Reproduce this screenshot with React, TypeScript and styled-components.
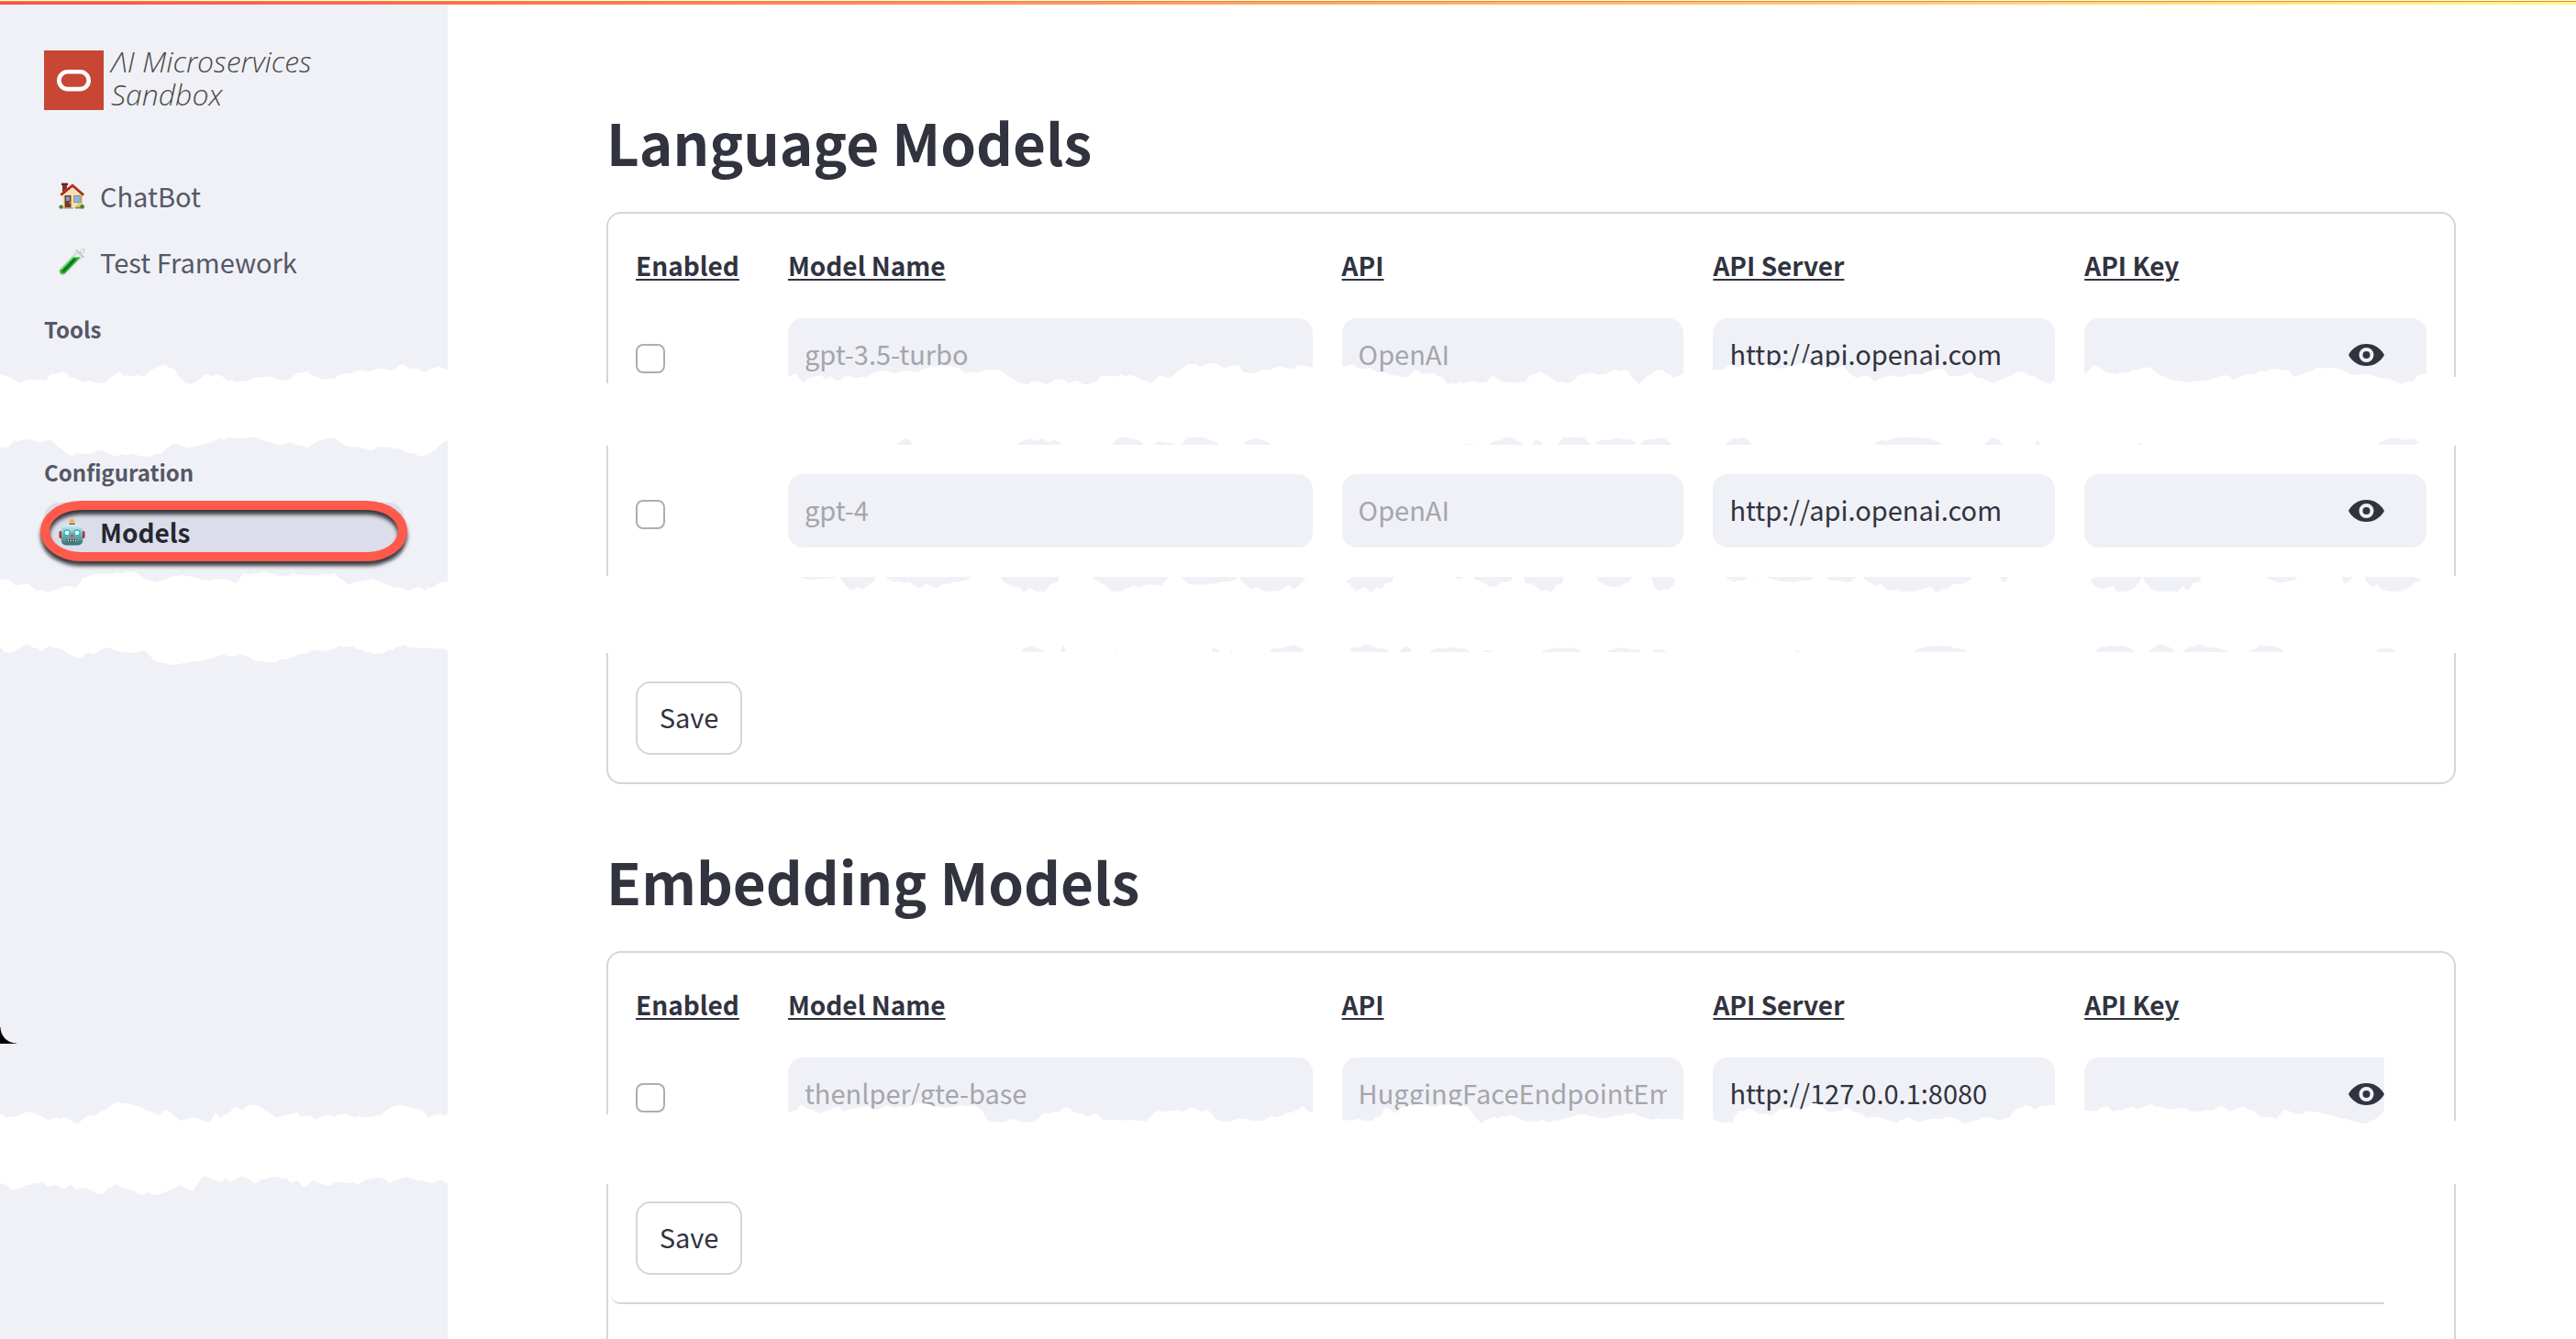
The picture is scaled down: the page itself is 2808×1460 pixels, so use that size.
import React from "react";
import styled, { createGlobalStyle } from "styled-components";

const ink = "#31333f";
const field = "#f0f1f7";
const line = "#d6d6d8";

const GlobalStyle = createGlobalStyle`
  *, *::before, *::after { box-sizing: border-box; }
  body {
    margin: 0;
    background: #fff;
    color: ${ink};
    font-family: "Noto Sans CJK SC", "Noto Sans", sans-serif;
    font-size: 29px;
  }
`;

const Page = styled.div`
  display: grid;
  grid-template-rows: auto 1fr;
  height: 100vh;
  overflow: hidden;
`;

const Decoration = styled.div`
  height: 5px;
  border-top: 1px solid #fff;
  background: linear-gradient(#f08a18 1px, transparent 1px),
    linear-gradient(90deg, #ff4f4b, #fff980);
`;

const Columns = styled.div`
  display: grid;
  grid-template-columns: 488px minmax(0, 1fr);
  min-height: 0;
`;

/* ---------- sidebar ---------- */

const Sidebar = styled.aside`
  display: flex;
  flex-direction: column;
  background: ${field};
  color: #555867;
`;

const Brand = styled.div`
  display: flex;
  align-items: flex-end;
  gap: 8px;
  margin: 44px 48px 60px;
`;

const BrandName = styled.span`
  font-family: "Open Sans", "Noto Sans", sans-serif;
  font-size: 32px;
  font-style: italic;
  font-weight: 300;
  line-height: 36px;
  white-space: nowrap;
  color: #4c4b49;
`;

const Nav = styled.nav`
  display: flex;
  flex-direction: column;
  gap: 8px;
  padding: 0 48px;
`;

const NavLink = styled.a<{ $active?: boolean }>`
  position: relative;
  display: flex;
  align-items: center;
  gap: 16px;
  height: 64px;
  padding: 0 16px;
  border-radius: 16px;
  background: ${(p) => (p.$active ? "#dbdeea" : "transparent")};
  color: ${(p) => (p.$active ? "#262730" : "inherit")};
  font-size: ${(p) => (p.$active ? 28 : 29)}px;
  font-weight: ${(p) => (p.$active ? 700 : 400)};
  text-decoration: none;

  svg { flex: none; }
`;

const Ring = styled.span`
  position: absolute;
  inset: -2px -4px 0;
  border: 10px solid #ff5a4c;
  border-radius: 44px / 33px;
  filter: drop-shadow(0 5px 2px rgba(0, 0, 0, 0.75));
`;

const CutLink = styled.div`
  height: 25px;
  padding: 18px 17px 0;
  overflow: hidden;
`;

const SectionLabel = styled.h2<{ $above: number; $below: number }>`
  margin: ${(p) => p.$above}px 48px ${(p) => p.$below}px;
  font-size: 24px;
  font-weight: 700;
  line-height: 40px;
`;

const Blank = styled.div<{ $height: number }>`
  display: flex;
  align-items: flex-end;
  height: ${(p) => p.$height}px;
`;

const WindowCorner = styled.span`
  width: 18px;
  height: 18px;
  background: radial-gradient(circle at top right, transparent 17px, #000 18px);
`;

/* ---------- main ---------- */

const Main = styled.main`
  display: flex;
  flex-direction: column;
  min-height: 0;
  padding: 110px 131px 0 173px;
`;

const Title = styled.h1`
  margin: 0 0 38px;
  font-size: 62px;
  font-weight: 700;
  line-height: 78px;
`;

const Card = styled.form<{ $open?: boolean }>`
  display: flex;
  flex-direction: column;
  flex: ${(p) => (p.$open ? "1" : "none")};
  margin-bottom: ${(p) => (p.$open ? 0 : 66)}px;
  padding: 30px 30px ${(p) => (p.$open ? 0 : 30)}px;
  border: 2px solid ${line};
  border-bottom-width: ${(p) => (p.$open ? 0 : 2)}px;
  border-radius: ${(p) => (p.$open ? "16px 16px 0 0" : "16px")};
`;

const Row = styled.div<{ $above?: number; $height?: number; $end?: boolean }>`
  display: grid;
  grid-template-columns:
    minmax(0, 134fr) minmax(0, 572fr) minmax(0, 373fr) minmax(0, 373fr)
    minmax(0, 373fr);
  column-gap: 32px;
  align-content: ${(p) => (p.$end ? "end" : "start")};
  height: ${(p) => p.$height ?? 80}px;
  margin-top: ${(p) => p.$above ?? 0}px;
  overflow: hidden;
`;

const Heading = styled.span`
  font-size: 28px;
  font-weight: 700;
  line-height: 52px;
  text-decoration: underline;
  text-decoration-thickness: 2px;
  text-underline-offset: 3px;
`;

const Tick = styled.input`
  appearance: none;
  width: 32px;
  height: 32px;
  margin: 28px 0 0;
  border: 2px solid #adadb3;
  border-radius: 8px;
  background: #fff;
`;

const Field = styled.div<{ $cut?: boolean }>`
  display: flex;
  align-items: center;
  height: 80px;
  margin-right: ${(p) => (p.$cut ? 46 : 0)}px;
  padding-right: ${(p) => (p.$cut ? 0 : 46)}px;
  border-radius: ${(p) => (p.$cut ? "16px 0 0 16px" : "16px")};
  background: ${field};
`;

const TextBox = styled.input`
  width: 100%;
  min-width: 0;
  height: 80px;
  padding: 0 18px 4px;
  border: 0;
  border-radius: 16px;
  background: ${field};
  color: ${ink};
  font: inherit;

  &:disabled {
    color: #a5a6ab;
    -webkit-text-fill-color: #a5a6ab;
  }
`;

const Reveal = styled.button`
  display: flex;
  padding: 0;
  border: 0;
  background: none;
  color: ${ink};
`;

const Stub = styled.span`
  height: 80px;
  border-radius: 16px;
  background: ${field};
`;

const SaveButton = styled.button<{ $above: number }>`
  align-self: flex-start;
  width: 116px;
  height: 80px;
  margin-top: ${(p) => p.$above}px;
  padding: 0 0 4px;
  border: 2px solid ${line};
  border-radius: 16px;
  background: #fff;
  color: ${ink};
  font: inherit;
`;

const FormEnd = styled.div`
  height: 10px;
  margin: 22px 46px 0 -27px;
  border-bottom: 2px solid ${line};
  border-bottom-left-radius: 12px;
`;

/* ---------- torn paper ---------- */

const TearBand = styled.div<{ $bleed: number }>`
  position: relative;
  z-index: 1;
  flex: none;
  height: 58px;
  margin: 0 -${(p) => p.$bleed}px;
  background: #fff;

  svg {
    position: absolute;
    top: -26px;
    left: 0;
    width: 100%;
    height: 110px;
    pointer-events: none;
  }
`;

type Pt = [number, number];

const pts = (s: string): Pt[] =>
  s.split(";").map((p) => p.split(",").map(Number) as Pt);

const noise = (n: number) => {
  const v = Math.sin(n * 12.9898) * 43758.5453;
  return v - Math.floor(v);
};

// Adds small fibres between the coarse points of an edge.
const roughen = (edge: Pt[]): Pt[] => {
  const out: Pt[] = [];
  edge.forEach(([x, y], i) => {
    out.push([x, y]);
    const next = edge[i + 1];
    if (!next) return;
    const steps = Math.floor((next[0] - x) / 4);
    for (let k = 1; k < steps; k++) {
      const t = k / steps;
      const px = x + (next[0] - x) * t;
      out.push([px, y + (next[1] - y) * t + (noise(px) - 0.5) * 3]);
    }
  });
  return out;
};

// An edge that is flat at `base` but for scraps reaching to the given y.
const scraps = (from: number, to: number, base: number, list: string): Pt[] => {
  const out: Pt[] = [[from, base]];
  list.split(";").forEach((s) => {
    const [a, b, y] = s.split(",").map(Number);
    out.push([a, base]);
    const n = Math.max(1, Math.round((b - a) / 6));
    for (let k = 0; k < n; k++) {
      const t = (k + 0.5) / n;
      const swell = Math.sqrt(Math.sin(Math.PI * t));
      const depth = swell * (0.5 + 0.5 * noise(a + k * 3));
      out.push([a + t * (b - a), base + (y - base) * depth]);
    }
    out.push([b, base]);
  });
  out.push([to, base]);
  return out;
};

interface TearProps {
  x: number;
  y: number;
  width: number;
  top: Pt[];
  bottom: Pt[];
  bleed?: number;
}

const Tear = ({ x, y, width, top, bottom, bleed = 0 }: TearProps) => {
  const outline = [...top, ...[...bottom].reverse()];
  return (
    <TearBand $bleed={bleed}>
      <svg
        viewBox={`${x} ${y - 26} ${width} 110`}
        preserveAspectRatio="none"
        aria-hidden="true"
      >
        <polygon fill="#fff" points={outline.map((p) => p.join(",")).join(" ")} />
      </svg>
    </TearBand>
  );
};

const sideTears = [
  {
    y: 419,
    top: "0,408;12,412;22,418;27,415;50,415;55,408;62,407;72,406;76,411;85,414;92,417;97,415;108,418;115,417;120,412;130,405;135,410;150,409;158,411;163,404;178,397;190,402;195,411;203,418;214,416;222,409;238,409;248,415;258,417;272,414;280,411;298,412;308,415;315,414;324,407;335,405;345,411;355,414;380,407;390,404;400,405;415,402;425,404;440,397;448,402;465,405;478,399;488,404",
    bottom:
      "0,488;8,488;15,481;30,479;45,482;55,480;63,487;75,496;92,495;110,491;125,498;145,494;160,498;175,495;188,484;198,486;205,489;214,486;225,483;240,478;262,478;280,477;290,481;300,484;318,483;335,488;348,480;363,478;375,485;390,487;403,491;415,487;430,489;445,494;458,498;465,496;475,490;488,480",
  },
  {
    y: 645,
    top: "0,632;10,632;16,638;30,636;40,644;54,645;68,640;84,640;90,630;110,626;130,625;148,624;155,629;170,635;190,627;210,629;220,633;235,631;250,632;258,636;265,625;290,624;305,629;320,625;345,627;365,625;370,631;382,637;393,634;405,631;415,635;430,641;445,644;455,640;463,644;475,638;488,634",
    bottom:
      "0,705;5,711;15,710;28,703;40,706;45,710;55,704;72,711;85,718;93,713;105,712;115,706;130,710;145,712;157,709;168,720;185,725;200,723;215,721;230,718;243,713;256,716;262,713;275,719;297,722;315,717;330,713;340,709;357,711;370,704;385,704;390,708;408,713;420,711;440,703;455,707;475,707;488,710",
  },
  {
    y: 1225,
    top: "0,1214;8,1219;20,1216;31,1212;42,1216;52,1221;70,1218;85,1225;92,1219;105,1216;115,1210;125,1203;138,1203;155,1208;165,1212;173,1216;180,1210;190,1217;197,1222;210,1218;220,1222;229,1223;235,1213;240,1219;250,1213;257,1206;264,1211;273,1204;282,1206;290,1211;300,1218;315,1215;323,1212;328,1217;340,1217;344,1221;357,1215;364,1218;377,1214;383,1217;395,1218;415,1216;425,1208;432,1205;445,1207;460,1210;467,1219;480,1215;484,1217;488,1214",
    bottom:
      "0,1290;8,1293;13,1298;22,1296;33,1292;46,1288;52,1294;62,1292;70,1297;77,1291;83,1297;95,1296;106,1302;113,1301;118,1295;126,1291;135,1296;145,1298;155,1303;163,1300;172,1303;182,1299;195,1292;210,1299;216,1290;222,1282;240,1289;246,1285;250,1289;263,1283;272,1286;278,1291;285,1286;300,1283;312,1285;318,1290;324,1287;331,1295;342,1287;350,1291;359,1293;370,1288;385,1289;390,1292;400,1286;415,1284;425,1290;432,1286;443,1283;455,1287;470,1290;482,1287;488,1291",
  },
];

const SideTear = ({ n }: { n: number }) => {
  const t = sideTears[n];
  return (
    <Tear
      x={0}
      y={t.y}
      width={488}
      top={roughen(pts(t.top))}
      bottom={roughen(pts(t.bottom))}
    />
  );
};

const firstTop =
  "661,418;664,418;859,411;868,407;875,418;882,412;895,409;900,414;905,410;912,415;920,411;935,412;948,409;965,404;975,407;985,404;1000,406;1015,400;1030,398;1045,401;1052,407;1065,406;1080,403;1092,405;1100,411;1110,417;1120,419;1130,416;1140,419;1155,413;1165,418;1172,415;1180,419;1195,417;1200,409;1210,410;1230,409;1240,412;1255,418;1265,409;1275,412;1285,404;1295,397;1312,399;1325,396;1335,401;1350,398;1355,406;1367,407;1380,403;1395,400;1410,402;1415,398;1431,401;" +
  "1463,400;1475,397;1483,402;1493,401;1500,405;1512,407;1525,410;1535,411;1542,403;1550,408;1560,407;1572,411;1578,419;1600,416;1620,417;1627,409;1637,416;1650,417;1662,417;1668,409;1680,405;1690,411;1698,417;1712,417;1720,410;1735,406;1745,408;1762,403;1775,405;1780,413;1787,419;1795,410;1803,405;1812,403;1825,412;1835,407;" +
  "1867,404;1880,402;1888,397;1895,401;1905,397;1915,399;1925,396;1935,401;1945,402;1955,398;1970,396;1985,400;1995,399;2000,402;2008,398;2015,406;2025,412;2035,410;2043,416;2052,412;2062,409;2075,411;2080,408;2095,408;2105,404;2118,402;2125,410;2140,409;2148,406;2155,412;2170,417;2185,412;2203,405;2215,410;2235,418;2240,414;" +
  "2272,409;2283,398;2290,402;2300,407;2320,406;2335,401;2345,401;2355,409;2370,415;2385,417;2410,414;2425,409;2435,414;2452,408;2465,404;2485,403;2495,404;2500,411;2515,405;2530,401;2548,402;2555,404;2565,409;2580,407;2590,411;2605,413;2617,419;2630,416;2635,410;2645,408;2674,411;2677,411";

const firstBottom =
  "977,995,477;1108,1158,477;1212,1247,475;1255,1283,480;1285,1329,475;1355,1387,476;1595,1610,483;1622,1662,474;1670,1682,478;1696,1735,475;1738,1785,474;1788,1822,475;1880,1910,474;2043,2118,474;2163,2185,477;2217,2225,479;2294,2298,483;2328,2336,479;2592,2640,475";

const secondTop =
  "871,915,633;915,955,645;965,1060,642;1090,1155,649;1190,1275,648;1285,1350,640;1350,1425,649;1463,1520,649;1585,1595,632;1605,1650,640;1660,1705,649;1740,1780,642;1800,1827,649;1880,1905,637;1912,1918,632;1925,1978,638;1990,2025,637;2030,2150,650;2180,2190,637;2277,2335,650;2335,2400,650;2470,2505,638;2552,2565,639;2577,2642,648";

const secondBottom =
  "1113,1140,702;1155,1163,703;1213,1219,709;1320,1330,704;1340,1345,706;1383,1427,701;1468,1515,701;1525,1540,703;1557,1605,704;1614,1630,709;1680,1725,704;1750,1790,704;1800,1818,707;1955,1963,705;2085,2145,702;2282,2328,701;2342,2372,701;2378,2430,701;2450,2490,701;2553,2559,709;2590,2612,702";

const thirdTop =
  "661,1215;664,1215;859,1213;868,1211;873,1204;880,1209;895,1214;905,1210;915,1207;920,1212;930,1209;945,1206;955,1210;965,1206;980,1207;990,1207;1000,1203;1015,1205;1030,1208;1045,1206;1060,1205;1070,1210;1077,1222;1090,1224;1105,1220;1120,1224;1128,1222;1137,1214;1148,1213;1155,1212;1163,1207;1175,1214;1185,1218;1195,1214;1203,1221;1220,1221;1240,1222;1248,1223;1258,1213;1275,1211;1290,1212;1299,1207;1310,1212;1318,1211;1325,1220;1337,1223;1355,1220;1370,1222;1395,1217;1403,1213;1412,1211;1420,1206;1431,1214;" +
  "1463,1223;1480,1220;1492,1222;1505,1217;1510,1208;1520,1214;1530,1207;1550,1204;1565,1207;1580,1204;1600,1207;1608,1218;1615,1225;1625,1219;1650,1217;1665,1223;1700,1222;1720,1215;1750,1219;1780,1213;1800,1221;1820,1220;1835,1221;" +
  "1867,1221;1880,1224;1888,1224;1893,1214;1905,1209;1918,1215;1930,1216;1940,1209;1955,1207;1963,1210;1975,1203;1985,1205;1995,1213;2003,1211;2015,1208;2025,1213;2035,1219;2045,1218;2057,1222;2067,1225;2080,1218;2090,1223;2105,1220;2125,1218;2143,1225;2155,1222;2165,1218;2178,1221;2190,1219;2200,1208;2208,1205;2218,1210;2227,1205;2240,1205;" +
  "2272,1211;2285,1212;2297,1206;2303,1212;2320,1208;2335,1208;2345,1204;2360,1209;2375,1208;2395,1212;2410,1211;2422,1206;2430,1212;2447,1207;2455,1210;2463,1217;2472,1218;2482,1220;2490,1210;2505,1215;2520,1212;2535,1215;2550,1219;2562,1222;2575,1225;2590,1220;2599,1210;2674,1222;2677,1222";

const mainTear = { x: 661, width: 2016, bleed: 32 };

/* ---------- drawings ---------- */

const OracleMark = () => (
  <svg width="65" height="66" viewBox="0 0 65 66" aria-hidden="true">
    <rect width="65" height="65" fill="#c74634" />
    <rect x="16.3" y="23.3" width="32.4" height="18.8" rx="9.4" fill="none" stroke="#fff" strokeWidth="4.6" />
  </svg>
);

const House = () => (
  <svg width="29" height="29" viewBox="0 0 29 29" aria-hidden="true">
    <rect x="4" y="1" width="5" height="9" fill="#8e2f2a" />
    <rect x="3" y="0.6" width="7" height="2.4" fill="#6b2320" />
    <path d="M4 28V13L15 3l11 10v15z" fill="#f6e0b5" />
    <path d="M19 28h7V13l-3-2.6z" fill="#e9c98f" />
    <path d="M15 1.2 28 12.4l-1.6 2L15 4.8 3 14.6l-1.6-2z" fill="#c8362e" />
    <path d="M15 4.8 3 14.6l-.8-1L15 3.4l12.2 10-.8 1z" fill="#8a211d" />
    <rect x="6.5" y="14" width="7" height="13.5" fill="#7b3a20" />
    <rect x="8" y="15.5" width="4" height="4.5" fill="#6aa5d8" />
    <circle cx="12.3" cy="22" r="0.8" fill="#f4c95e" />
    <rect x="16" y="14" width="8.6" height="8" fill="#b48a5c" />
    <rect x="17" y="15" width="6.6" height="6" fill="#7db9ea" />
    <path d="M5 27.2h11v1.4H5z" fill="#a7a29c" />
    <circle cx="2.6" cy="26.6" r="2.2" fill="#4d7f2c" />
    <circle cx="25.6" cy="26.4" r="2.4" fill="#4d7f2c" />
    <path d="M18 26.5h6v2h-6z" fill="#739b45" />
  </svg>
);

const TestTube = () => (
  <svg width="29" height="29" viewBox="0 0 29 29" aria-hidden="true">
    <path d="M20.5 3.2 26 8.4 7 27.3c-1.7 1.7-4 1.6-5.3.3s-1.3-3.6.2-5.2z" fill="#dfeee2" stroke="#a9b5ad" strokeWidth="0.8" />
    <path d="M15.5 9.500h8L7 26.700c-1.500 1.500-3.600 1.400-4.700.3s-1.100-3 .2-4.400z" fill="#1fae2c" />
    <path d="M17 12 5.500 24" stroke="#0c7a1a" strokeWidth="3" strokeLinecap="round" />
    <path d="M15 10.500 3.500 22.500" stroke="#5fe06a" strokeWidth="1.2" strokeLinecap="round" />
    <path d="m19.500 2 7.500 7.200" stroke="#c5cfc8" strokeWidth="2.2" strokeLinecap="round" />
    <circle cx="25.5" cy="2.8" r="2.2" fill="#eef5ef" stroke="#b9c7bc" strokeWidth="0.8" />
    <circle cx="28" cy="0.9" r="0.7" fill="#5fe06a" />
  </svg>
);

const Robot = () => (
  <svg width="29" height="29" viewBox="0 0 29 29" aria-hidden="true">
    <defs>
      <linearGradient id="robotFace" x1="0" y1="0" x2="0" y2="1">
        <stop offset="0" stopColor="#d9f3ee" />
        <stop offset="0.45" stopColor="#7fb9b8" />
        <stop offset="1" stopColor="#2f7377" />
      </linearGradient>
    </defs>
    <path d="M11.5 4.500h6v3h-6z" fill="#6a4a9c" />
    <circle cx="14.5" cy="2.500" r="2.500" fill="#f5b829" />
    <rect x="0.5" y="13" width="3.500" height="8" rx="1.500" fill="#a3302c" />
    <rect x="25" y="13" width="3.500" height="8" rx="1.500" fill="#a3302c" />
    <rect x="2.8" y="6" width="23.4" height="22.5" rx="5" fill="url(#robotFace)" />
    <circle cx="9" cy="15" r="3.800" fill="#2cb7cf" />
    <circle cx="9" cy="15" r="2.300" fill="#fff" />
    <circle cx="20" cy="15" r="3.800" fill="#2cb7cf" />
    <circle cx="20" cy="15" r="2.300" fill="#fff" />
    <path d="m14.500 15.500 2.200 4h-4.400z" fill="#d8433b" />
    <rect x="9" y="22" width="11" height="3" rx="1" fill="#3b3f46" />
    <path d="M10.500 22.500v2M13.200 22.500v2M15.900 22.500v2M18.600 22.500v2" stroke="#f2f2f2" strokeWidth="1.3" />
  </svg>
);

const ToolTip = () => (
  <svg width="20" height="5" viewBox="0 0 20 5" aria-hidden="true">
    <path d="M2 0h6L6 2H0zM10 0h8l-2 3h-3z" fill="#8b9699" />
  </svg>
);

const Eye = () => (
  <svg width="39" height="24" viewBox="0 0 39 24" aria-hidden="true">
    <path
      fillRule="evenodd"
      fill="currentColor"
      d="M19.500 0C11 0 4 4.600 0 12c4 7.400 11 12 19.500 12S35 19.400 39 12C35 4.600 28 0 19.500 0zm0 4a8 8 0 1 1 0 16 8 8 0 0 1 0-16zm0 4a4 4 0 1 0 0 8 4 4 0 0 0 0-8z"
    />
  </svg>
);

/* ---------- page ---------- */

interface Model {
  name: string;
  api: string;
  server: string;
}

const ModelRow = ({ name, api, server, above, height, cut }: Model & { above: number; height?: number; cut?: boolean }) => (
  <Row $above={above} $height={height}>
    <Tick type="checkbox" aria-label={`Enable ${name}`} />
    <TextBox aria-label="Model Name" defaultValue={name} disabled />
    <TextBox aria-label="API" defaultValue={api} disabled />
    <TextBox aria-label="API Server" defaultValue={server} />
    <Field $cut={cut}>
      <TextBox type="password" aria-label="API Key" />
      <Reveal type="button" aria-label="Show API key">
        <Eye />
      </Reveal>
    </Field>
  </Row>
);

const HeadingRow = () => (
  <Row $height={52}>
    {["Enabled", "Model Name", "API", "API Server", "API Key"].map((h) => (
      <Heading key={h}>{h}</Heading>
    ))}
  </Row>
);

const StubRow = ({ height, end }: { height: number; end?: boolean }) => (
  <Row $height={height} $end={end} $above={end ? 0 : 32}>
    <span />
    <Stub />
    <Stub />
    <Stub />
    <Stub />
  </Row>
);

export default function App() {
  return (
    <Page>
      <GlobalStyle />
      <Decoration />
      <Columns>
        <Sidebar>
          <Brand>
            <OracleMark />
            <BrandName>
              ΛI Microservices
              <br />
              Sandbox
            </BrandName>
          </Brand>
          <Nav>
            <NavLink href="#chatbot">
              <House />
              ChatBot
            </NavLink>
            <NavLink href="#tests">
              <TestTube />
              Test Framework
            </NavLink>
          </Nav>
          <SectionLabel $above={22} $below={40}>Tools</SectionLabel>
          <SideTear n={0} />
          <SectionLabel $above={18} $below={13}>Configuration</SectionLabel>
          <Nav>
            <NavLink href="#models" $active>
              <Robot />
              Models
              <Ring />
            </NavLink>
            <CutLink>
              <ToolTip />
            </CutLink>
          </Nav>
          <SideTear n={1} />
          <Blank $height={435}>
            <WindowCorner />
          </Blank>
          <Blank $height={87} />
          <SideTear n={2} />
        </Sidebar>

        <Main>
          <Title>Language Models</Title>
          <Card>
            <HeadingRow />
            <ModelRow name="gpt-3.5-turbo" api="OpenAI" server="http://api.openai.com" above={32} height={72} />
            <Tear {...mainTear} y={419} top={roughen(pts(firstTop))} bottom={scraps(661, 2677, 486, firstBottom)} />
            <StubRow height={8} end />
            <ModelRow name="gpt-4" api="OpenAI" server="http://api.openai.com" above={32} />
            <StubRow height={16} />
            <Tear {...mainTear} y={645} top={scraps(661, 2677, 628, secondTop)} bottom={scraps(661, 2677, 712, secondBottom)} />
            <StubRow height={8} end />
            <SaveButton type="button" $above={32}>Save</SaveButton>
          </Card>

          <Title>Embedding Models</Title>
          <Card $open>
            <HeadingRow />
            <ModelRow name="thenlper/gte-base" api="HuggingFaceEndpointEmbeddings" server="http://127.0.0.1:8080" above={32} height={72} cut />
            <Tear {...mainTear} y={1225} top={roughen(pts(thirdTop))} bottom={pts("661,1291;2677,1291")} />
            <SaveButton type="button" $above={27}>Save</SaveButton>
            <FormEnd />
          </Card>
        </Main>
      </Columns>
    </Page>
  );
}
